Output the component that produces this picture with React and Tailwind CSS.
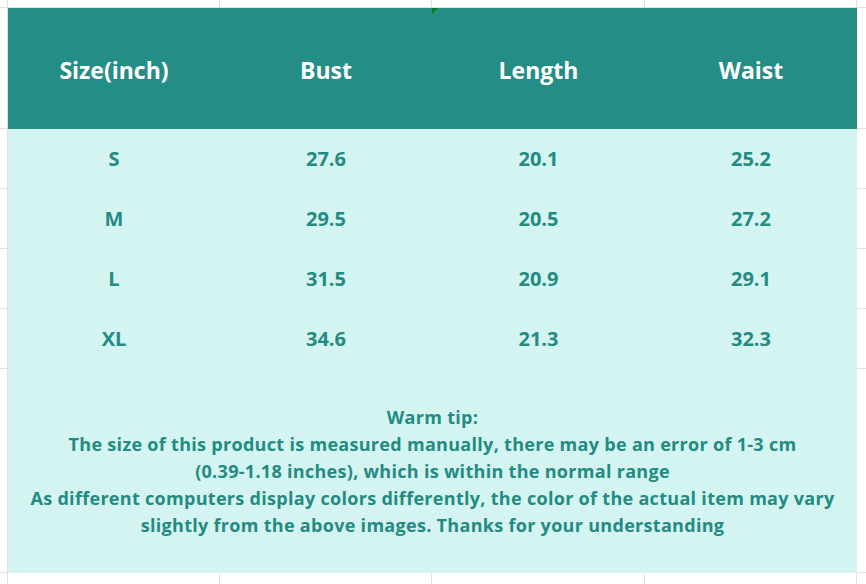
const rows = [
  ['S', '27.6', '20.1', '25.2'],
  ['M', '29.5', '20.5', '27.2'],
  ['L', '31.5', '20.9', '29.1'],
  ['XL', '34.6', '21.3', '32.3'],
];

const colWidths = ['w-[8px]', 'w-[212px]', 'w-[212px]', 'w-[213px]', 'w-[212px]', 'flex-1'];
const sideHeights = ['h-[121px]', 'h-[60px]', 'h-[60px]', 'h-[60px]', 'h-[60px]', 'h-[204px]'];

function EdgeRow({ bottom }) {
  return (
    <div className={`flex h-[8px] ${bottom ? 'flex-1' : ''}`}>
      {colWidths.map((w, i) => (
        <div
          key={i}
          className={`${w} border-[#e1e1e1] ${bottom ? '' : 'border-b'} ${i < colWidths.length - 1 ? 'border-r' : ''}`}
        />
      ))}
    </div>
  );
}

function SideStrip({ left }) {
  return (
    <div className={`flex flex-col ${left ? 'w-[8px] border-r border-[#e1e1e1]' : 'flex-1'}`}>
      {sideHeights.map((h, i) => (
        <div key={i} className={`${h} border-b border-[#e1e1e1]`} />
      ))}
    </div>
  );
}

export default function App() {
  return (
    <div
      className="w-[866px] h-[584px] bg-white flex flex-col overflow-hidden"
      style={{ fontFamily: '"Open Sans", "Noto Sans", sans-serif' }}
    >
      <EdgeRow />
      <div className="flex">
        <SideStrip left />
        <div className="w-[849px] flex flex-col">
          {/* header */}
          <div className="relative h-[121px] pt-1 bg-[#248d85] grid grid-cols-[212px_212px_213px_212px] items-center text-white text-[23px] font-bold">
            <div className="text-center">Size(inch)</div>
            <div className="text-center">Bust</div>
            <div className="text-center">Length</div>
            <div className="text-center">Waist</div>
            <div className="absolute left-[424px] top-0 w-0 h-0 border-t-[6px] border-r-[6px] border-t-[#0a7d12] border-r-transparent" />
          </div>
          {/* data */}
          <div className="bg-[#d3f4f1] text-[#238b82] font-bold text-[20px]">
            {rows.map((r) => (
              <div key={r[0]} className="h-[60px] grid grid-cols-[212px_212px_213px_212px] items-center">
                {r.map((c, i) => (
                  <div key={i} className="text-center">{c}</div>
                ))}
              </div>
            ))}
            <div className="h-[204px] flex flex-col items-center justify-center text-center text-[18px] tracking-[0.3px] leading-[27px]">
              <div>Warm tip:</div>
              <div>The size of this product is measured manually, there may be an error of 1-3 cm</div>
              <div>(0.39-1.18 inches), which is within the normal range</div>
              <div>As different computers display colors differently, the color of the actual item may vary</div>
              <div>slightly from the above images. Thanks for your understanding</div>
            </div>
          </div>
        </div>
        <SideStrip />
      </div>
      <EdgeRow bottom />
    </div>
  );
}
